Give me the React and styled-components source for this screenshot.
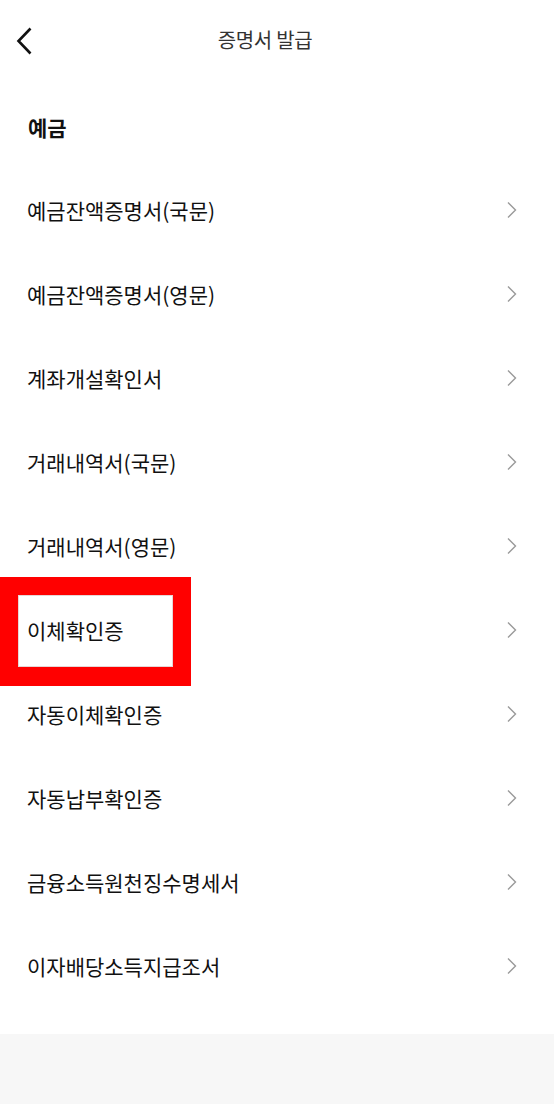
import React from "react";
import styled, { createGlobalStyle } from "styled-components";

const Global = createGlobalStyle`
  html, body { margin: 0; padding: 0; background: #ffffff; }
  body { font-family: "Noto Sans CJK KR", "Noto Sans", sans-serif; }
  * { box-sizing: border-box; }
`;

const Page = styled.div`
  width: 554px;
  min-height: 1104px;
  display: flex;
  flex-direction: column;
  background: #f7f7f7;
`;

const Sheet = styled.div`
  background: #ffffff;
  padding-bottom: 26px;
`;

const Header = styled.header`
  height: 82px;
  display: grid;
  grid-template-columns: 60px 1fr 84px;
  align-items: center;
`;

const BackButton = styled.button`
  border: 0;
  background: none;
  padding: 0 0 0 15px;
  height: 40px;
  display: flex;
  align-items: center;
  cursor: pointer;
`;

const Title = styled.h1`
  margin: 0;
  text-align: center;
  font-size: 20px;
  font-weight: 400;
  color: #333333;
  letter-spacing: -0.3px;
  line-height: 1;
  padding-bottom: 2px;
`;

const SectionTitle = styled.h2`
  margin: 0;
  height: 86px;
  padding: 30px 0 0 28px;
  font-size: 21px;
  font-weight: 700;
  color: #111111;
`;

const List = styled.ul`
  list-style: none;
  margin: 0;
  padding: 0;
`;

const Row = styled.li`
  position: relative;
  height: 84px;
  display: flex;
  align-items: center;
  justify-content: space-between;
  padding: 0 36px 0 27px;
`;

const Label = styled.span`
  position: relative;
  z-index: 1;
  font-size: 21px;
  color: #111111;
`;

const Highlight = styled.div`
  position: absolute;
  left: 0;
  top: -11px;
  width: 191px;
  height: 109px;
  border-style: solid;
  border-color: #ff0000;
  border-width: 18px 18px 19px 18px;
  background: #ffffff;
  box-shadow: inset 0 0 0 1px #e6d6d6;
  pointer-events: none;
`;

const Chevron = () => (
  <svg width="12" height="18" viewBox="0 0 12 18" fill="none">
    <path d="M2 1.5 L9.5 9 L2 16.5" stroke="#9a9a9a" strokeWidth="1.4" />
  </svg>
);

const BackIcon = () => (
  <svg width="20" height="28" viewBox="0 0 20 28" fill="none">
    <path d="M15.5 1.5 L3.5 14 L15.5 26.5" stroke="#111" strokeWidth="2.6" />
  </svg>
);

const items = [
  "예금잔액증명서(국문)",
  "예금잔액증명서(영문)",
  "계좌개설확인서",
  "거래내역서(국문)",
  "거래내역서(영문)",
  "이체확인증",
  "자동이체확인증",
  "자동납부확인증",
  "금융소득원천징수명세서",
  "이자배당소득지급조서",
];

export default function App() {
  return (
    <Page>
      <Global />
      <Sheet>
        <Header>
          <BackButton aria-label="back">
            <BackIcon />
          </BackButton>
          <Title>증명서 발급</Title>
          <span />
        </Header>
        <SectionTitle>예금</SectionTitle>
        <List>
          {items.map((t, i) => (
            <Row key={t}>
              {i === 5 && <Highlight />}
              <Label>{t}</Label>
              <Chevron />
            </Row>
          ))}
        </List>
      </Sheet>
    </Page>
  );
}
